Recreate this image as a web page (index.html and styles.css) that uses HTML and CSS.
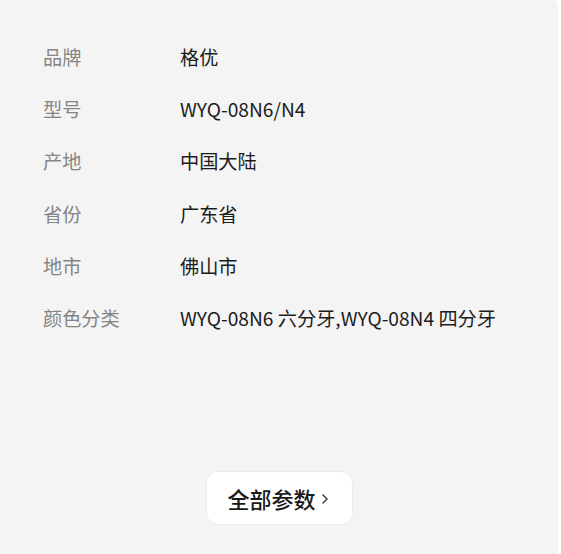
FILE: index.html
```html
<!DOCTYPE html>
<html lang="zh-CN">
<head>
<meta charset="utf-8">
<link rel="stylesheet" href="styles.css">
</head>
<body>
<div class="panel">
  <div class="params">
    <div class="row"><span class="label">品牌</span><span class="value">格优</span></div>
    <div class="row"><span class="label">型号</span><span class="value">WYQ-08N6/N4</span></div>
    <div class="row"><span class="label">产地</span><span class="value">中国大陆</span></div>
    <div class="row"><span class="label">省份</span><span class="value">广东省</span></div>
    <div class="row"><span class="label">地市</span><span class="value">佛山市</span></div>
    <div class="row"><span class="label">颜色分类</span><span class="value">WYQ-08N6 六分牙,WYQ-08N4 四分牙</span></div>
  </div>
  <div class="actions">
    <button class="all-btn">全部参数<svg class="chev" width="8" height="12" viewBox="0 0 8 12"><path d="M2 2 L6 6 L2 10" fill="none" stroke="#333" stroke-width="1.4" stroke-linecap="round" stroke-linejoin="round"/></svg></button>
  </div>
</div>
</body>
</html>
```
FILE: styles.css
```css
html, body {
  margin: 0;
  padding: 0;
  background: #ffffff;
}
body {
  font-family: "Noto Sans CJK SC", "Noto Sans", sans-serif;
}
.panel {
  width: 558px;
  height: 554px;
  background: #f4f4f4;
  border-top-right-radius: 5px;
  box-sizing: border-box;
  padding-top: 31px;
}
.params {
  padding-left: 43px;
}
.row {
  display: flex;
  height: 52.2px;
  align-items: center;
  font-size: 19.2px;
}
.label {
  width: 137px;
  color: #858585;
}
.value {
  color: #1c1c1c;
}
.actions {
  display: flex;
  justify-content: center;
  margin-top: 127px;
}
.all-btn {
  width: 147px;
  height: 54px;
  background: #ffffff;
  border: 1px solid #ececec;
  border-radius: 12px;
  font-family: "Noto Sans CJK SC", "Noto Sans", sans-serif;
  font-size: 22px;
  font-weight: 500;
  color: #1a1a1a;
  display: flex;
  align-items: center;
  justify-content: center;
  gap: 5px;
  padding: 0 2px 0 0;
}
.chev {
  display: block;
  margin-top: 1px;
}
```
